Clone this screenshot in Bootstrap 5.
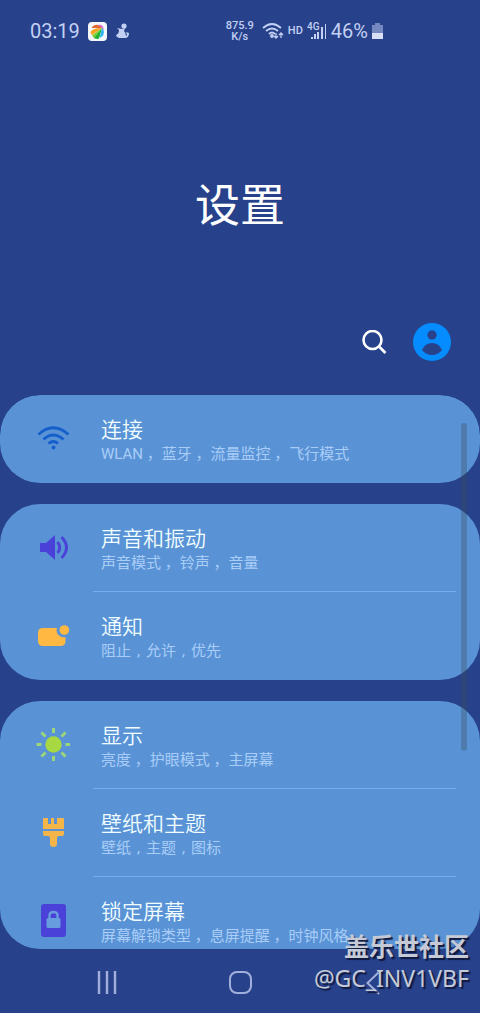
<!DOCTYPE html>
<html lang="zh-CN">
<head>
<meta charset="utf-8">
<meta name="viewport" content="width=device-width, initial-scale=1">
<title>设置</title>
<link href="https://cdn.jsdelivr.net/npm/bootstrap@5.3.0/dist/css/bootstrap.min.css" rel="stylesheet">
<style>
  body { background: #27428b; font-family: Roboto, "Noto Sans CJK SC", sans-serif; color: #fff; }
  .status-bar { height: 62px; padding: 0 96px 0 30px; color: #c3d0f3; font-size: 20px; line-height: 24px; }
  .net-speed { font-size: 11px; line-height: 11px; font-weight: 500; }
  .hd-label { font-size: 11px; line-height: 12px; font-weight: 500; }
  .hero-title { height: 240px; padding-top: 50px; }
  .hero-title h1 { font-size: 45px; line-height: 56px; font-weight: 400; }
  .tool-row { height: 80px; padding-right: 29px; gap: 26px; }
  .list-area { border-radius: 40px; margin-top: 13px; }
  .list-area, .app-frame { min-height: 0; }
  .group-card { background: #5993d6; border-radius: 40px; flex: none; }
  .group-stack { gap: 21px; }
  .setting-row { height: 88px; color: #f2fdff; }
  .icon-cell { width: 93px; padding-left: 36px; flex: none; }
  .text-cell { margin-right: 24px; padding: 21px 0 0 8px; border-bottom: 1px solid transparent; }
  .setting-row:not(:last-child) .text-cell { border-bottom-color: #78aeee; }
  .row-title { font-size: 21px; line-height: 28px; font-weight: 350; }
  .row-note { font-size: 15px; line-height: 20px; color: #a9cdf6; }
  .tight-comma { display: inline-block; width: 15px; text-align: center; }
  .scroll-thumb { top: 28px; right: 13px; width: 6px; height: 328px; border-radius: 3px; background: rgba(58, 78, 90, .34); }
  .nav-keys { height: 64px; padding: 4px 40px 0; }
  .stamp { right: 11px; bottom: 18px; color: #c6cad6; text-shadow: 2px 2px 1px #10193f; }
  .stamp-site { font: 700 25px/32px "Noto Sans CJK SC", sans-serif; padding-bottom: 2px; }
  .stamp-user { font: 400 23px/30px "Noto Sans", sans-serif; margin-bottom: 2px; }
</style>
</head>
<body>
<div class="app-frame vh-100 d-flex flex-column position-relative overflow-hidden">
  <header class="flex-shrink-0">
    <div class="status-bar d-flex align-items-center justify-content-between">
      <div class="d-flex align-items-center gap-2">
        <span>03:19</span>
        <svg width="19" height="19" viewBox="0 0 19 19" aria-hidden="true">
          <rect width="19" height="19" rx="4" fill="#f4f7fb"/>
          <path d="M4 5Q8 1 12 4L14 6H4Z" fill="#e06a35"/>
          <path d="M10 3q5-1 6 5l-3-3Z" fill="#d85fd0"/>
          <path d="M2.500 11Q3 6 14 6L4 13Z" fill="#f5a524"/>
          <path d="M14 6 4 13.500 6 16Z" fill="#7ccf2e"/>
          <path d="M14 6 6 16q3 1.500 5 .5Z" fill="#1fb32f"/>
          <path d="m14 6-2.500 10q6-3 4-8Z" fill="#2fb8ee"/>
        </svg>
        <svg width="15" height="18" viewBox="0 0 15 18" fill="#c3d0f3" aria-hidden="true">
          <circle cx="9" cy="4" r="2.600"/>
          <path d="M2 6l5 1 3-1-1 3q2 2 2 5l1-1-1-3 3 1q0 4-3 5H4Q1 15 1 13q3-1 3-5Z"/>
        </svg>
      </div>
      <div class="d-flex align-items-center gap-1">
        <div class="net-speed text-center"><div>875.9</div><div>K/s</div></div>
        <svg class="ms-1" width="22" height="18" viewBox="0 0 22 18" fill="none" stroke="#c3d0f3" stroke-width="1.800" aria-hidden="true">
          <path d="M1 6Q10-2 19 6M4 9q6-5 12 0M7 12q3-3 6 0"/>
          <circle cx="10" cy="14" r="1" fill="#c3d0f3"/>
          <path d="M14 11v5m-2-2 2 2 2-2M19 16v-5m-2 2 2-2 2 2" stroke-width="1.300"/>
        </svg>
        <span class="hd-label">HD</span>
        <svg width="20" height="18" viewBox="0 0 20 18" fill="#c3d0f3" aria-hidden="true">
          <path d="M4 15h2v2H4zM7 12h2v5H7zM10 10h2v7h-2zM14 5h2v12h-2zM18 2h1v15h-1z"/>
          <text x="0" y="8" font-size="10" font-weight="500">4G</text>
        </svg>
        <span>46%</span>
        <svg width="12" height="17" viewBox="0 0 12 17" aria-hidden="true">
          <path d="M3 0h5v2h3v8H0V2h3Z" fill="#7588c0"/>
          <path d="M0 10h11v6H0Z" fill="#d9e0f6"/>
        </svg>
      </div>
    </div>
    <div class="hero-title d-flex align-items-center justify-content-center pb-0">
      <h1 class="mb-0">设置</h1>
    </div>
    <div class="tool-row d-flex align-items-center justify-content-end">
      <button class="btn p-0 border-0 d-flex" type="button" aria-label="搜索">
        <svg width="25" height="25" viewBox="0 0 25 25" fill="none" stroke="#fff" stroke-width="2.600">
          <circle cx="10.500" cy="10" r="9"/><path d="m16.500 16 7 7"/>
        </svg>
      </button>
      <button class="btn p-0 border-0 d-flex" type="button" aria-label="账户">
        <svg width="38" height="38" viewBox="0 0 38 38">
          <circle cx="19" cy="19" r="19" fill="#058cff"/>
          <circle cx="19" cy="12" r="4.700" fill="#27428b"/>
          <path d="M9 27q3-7 10-7t10 7q-4 5-10 5T9 27Z" fill="#27428b"/>
        </svg>
      </button>
    </div>
  </header>

  <main class="list-area flex-grow-1 overflow-hidden position-relative">
    <div class="group-stack d-flex flex-column">
      <section class="group-card">
        <a href="#" class="setting-row d-flex text-decoration-none">
          <span class="icon-cell d-flex align-items-center">
            <svg width="34" height="34" viewBox="0 0 34 34" fill="none" stroke="#155fcd" stroke-width="2.800">
              <path d="M2.500 12.500Q17-1 32.500 12.500M7.500 17.500q9.500-9 20 0M12.500 21.500q5-4 9.500 0"/>
              <circle cx="17.500" cy="25.500" r="2" fill="#155fcd" stroke="none"/>
            </svg>
          </span>
          <span class="text-cell flex-grow-1"><span class="row-title d-block">连接</span><span class="row-note d-block">WLAN ，蓝牙 ，流量监控 ，飞行模式</span></span>
        </a>
      </section>

      <section class="group-card">
        <a href="#" class="setting-row d-flex text-decoration-none">
          <span class="icon-cell d-flex align-items-center">
            <svg width="34" height="34" viewBox="0 0 34 34">
              <path d="M4 12h6l9-8v25l-9-8H4Z" fill="#4a41d8"/>
              <path d="M21.500 11q4.500 5.500 0 11M25.500 6q10 10.500 0 21" fill="none" stroke="#4a41d8" stroke-width="2.800"/>
            </svg>
          </span>
          <span class="text-cell flex-grow-1"><span class="row-title d-block">声音和振动</span><span class="row-note d-block">声音模式 ，铃声 ，音量</span></span>
        </a>
        <a href="#" class="setting-row d-flex text-decoration-none">
          <span class="icon-cell d-flex align-items-center">
            <svg width="34" height="34" viewBox="0 0 34 34" fill="#ffb943">
              <path d="M7 9h14a7 7 0 0 0 8.500 9v4q0 5-5 5H7q-5 0-5-5v-8q0-5 5-5Z"/>
              <circle cx="28.300" cy="11" r="4.800"/>
            </svg>
          </span>
          <span class="text-cell flex-grow-1"><span class="row-title d-block">通知</span><span class="row-note d-block">阻止<span class="tight-comma">,</span>允许<span class="tight-comma">,</span>优先</span></span>
        </a>
      </section>

      <section class="group-card">
        <a href="#" class="setting-row d-flex text-decoration-none">
          <span class="icon-cell d-flex align-items-center">
            <svg width="34" height="34" viewBox="0 0 34 34">
              <circle cx="17.500" cy="16.500" r="8.200" fill="#a7d741"/>
              <path d="M17.500 0v5M17.500 28v5M.5 16.500h5M29.500 16.500h5M5.500 4.500l4 4M25.500 24.500l4 4M29.500 4.500l-4 4M9.500 24.500l-4 4" stroke="#9bd67c" stroke-width="3"/>
            </svg>
          </span>
          <span class="text-cell flex-grow-1"><span class="row-title d-block">显示</span><span class="row-note d-block">亮度 ，护眼模式 ，主屏幕</span></span>
        </a>
        <a href="#" class="setting-row d-flex text-decoration-none">
          <span class="icon-cell d-flex align-items-center">
            <svg width="34" height="34" viewBox="0 0 34 34" fill="#f6b548">
              <path d="M8 2h4v6h3V2h3v6h3V2h6q1 0 1 1v10H7V3q0-1 1-1ZM7 15h21v3q0 2-2 2h-3q-2 0-2 2v6q0 3-3.500 3T14 28v-6q0-2-2-2H9q-2 0-2-2Z"/>
            </svg>
          </span>
          <span class="text-cell flex-grow-1"><span class="row-title d-block">壁纸和主题</span><span class="row-note d-block">壁纸<span class="tight-comma">,</span>主题<span class="tight-comma">,</span>图标</span></span>
        </a>
        <a href="#" class="setting-row d-flex text-decoration-none">
          <span class="icon-cell d-flex align-items-center">
            <svg width="34" height="34" viewBox="0 0 34 34">
              <rect x="5" y="0" width="25" height="33" rx="3" fill="#4a41d8"/>
              <path d="M13.500 14v-2.500q0-3.500 4-3.500t4 3.500V14" fill="none" stroke="#679cdf" stroke-width="2.400"/>
              <rect x="10.500" y="14" width="14" height="10" rx="1.500" fill="#679cdf"/>
            </svg>
          </span>
          <span class="text-cell flex-grow-1"><span class="row-title d-block">锁定屏幕</span><span class="row-note d-block">屏幕解锁类型 ，息屏提醒 ，时钟风格</span></span>
        </a>
      </section>
    </div>
    <div class="scroll-thumb position-absolute"></div>
  </main>

  <nav class="nav-keys d-flex align-items-center flex-shrink-0">
    <button class="btn border-0 p-0 col-4 d-flex justify-content-center" type="button" aria-label="最近任务">
      <svg width="20" height="24" viewBox="0 0 20 24" stroke="#a2afdc" stroke-width="2.400"><path d="M2 0v23M10 0v23M18 0v23"/></svg>
    </button>
    <button class="btn border-0 p-0 col-4 d-flex justify-content-center" type="button" aria-label="主页">
      <svg width="24" height="24" viewBox="0 0 24 24" fill="none" stroke="#a2afdc" stroke-width="2"><rect x="2" y="1" width="21" height="21" rx="7"/></svg>
    </button>
    <button class="btn border-0 p-0 col-4 d-flex justify-content-center" type="button" aria-label="返回">
      <svg width="14" height="24" viewBox="0 0 14 24" fill="none" stroke="#a2afdc" stroke-width="2"><path d="M13 1 1.500 12 13 23"/></svg>
    </button>
  </nav>

  <div class="stamp position-absolute text-end pe-none">
    <div class="stamp-site">盖乐世社区</div>
    <div class="stamp-user">@GC_INV1VBF</div>
  </div>
</div>
<script src="https://cdn.jsdelivr.net/npm/bootstrap@5.3.0/dist/js/bootstrap.bundle.min.js"></script>
</body>
</html>
